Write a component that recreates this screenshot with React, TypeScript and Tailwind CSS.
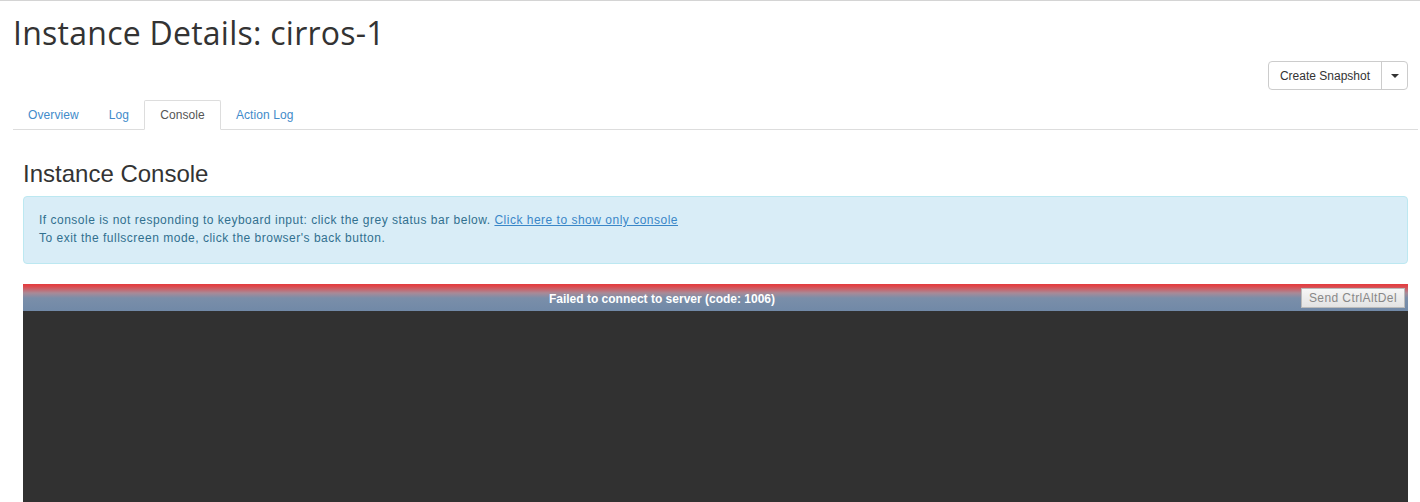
const tabs = ['Overview', 'Log', 'Console', 'Action Log'];

export default function App() {
    return (
        <div className="min-h-[502px] bg-white border-t border-[#d4d4d4] font-['Liberation_Sans',Arial,sans-serif] text-[#333] overflow-hidden">
            <div className="pl-[13px] pr-[2px]">
                <h1 className="pt-[14px] h-[60px] text-[32px] leading-[36px] font-['Open_Sans',sans-serif] text-[#333] tracking-[0.25px]">
                    Instance Details: cirros-1
                </h1>

                <div className="flex justify-end pr-[10px]">
                    <div className="flex h-[29px] border border-[#ccc] rounded-[4px] text-[12px] text-[#333]">
                        <button className="px-[11px] border-r border-[#ccc]">Create Snapshot</button>
                        <button className="w-[25px] flex items-center justify-center">
                            <span className="w-0 h-0 border-l-[4px] border-r-[4px] border-t-[4px] border-l-transparent border-r-transparent border-t-[#333]" />
                        </button>
                    </div>
                </div>

                <ul className="mt-[10px] flex h-[30px] border-b border-[#ddd] text-[12px] tracking-[0.1px]">
                    {tabs.map(t => (
                        <li
                            key={t}
                            className={
                                t === 'Console'
                                    ? 'px-[15px] leading-[28px] border border-[#ddd] border-b-white -mb-px bg-white text-[#555] rounded-t-[2px]'
                                    : 'px-[15px] leading-[28px] border-y border-transparent text-[#428bca]'
                            }
                        >
                            {t}
                        </li>
                    ))}
                </ul>

                <div className="px-[10px]">
                    <h3 className="mt-[30px] text-[24px] leading-[28px] text-[#333]">Instance Console</h3>

                    <div className="mt-[8px] h-[68px] px-[15px] pt-[14px] bg-[#d9edf7] border border-[#bce8f1] rounded-[4px] text-[12px] leading-[18px] tracking-[0.5px] text-[#31708f]">
                        <p>
                            If console is not responding to keyboard input: click the grey status bar below.{' '}
                            <a className="underline text-[#3a87c8]" href="#">Click here to show only console</a>
                        </p>
                        <p>To exit the fullscreen mode, click the browser's back button.</p>
                    </div>

                    <div className="mt-[20px]">
                        <div className="h-[27px] bg-[linear-gradient(to_bottom,#e23b3e_0px,#e04448_2px,#a98a97_9px,#7a8ea9_14px,#7189a7_27px)] flex items-center">
                            <span className="flex-1 text-center text-[12px] font-bold text-white pt-[2px]">Failed to connect to server (code: 1006)</span>
                            <button className="self-start mr-[3px] mt-[4px] h-[20px] px-[7px] text-[12px] tracking-[0.4px] text-[#888] border border-[#bbb] bg-[linear-gradient(to_bottom,#f6f6f6,#e3e3e3)]">
                                Send CtrlAltDel
                            </button>
                        </div>
                        <div className="h-[200px] bg-[#313131]" />
                    </div>
                </div>
            </div>
        </div>
    );
}
